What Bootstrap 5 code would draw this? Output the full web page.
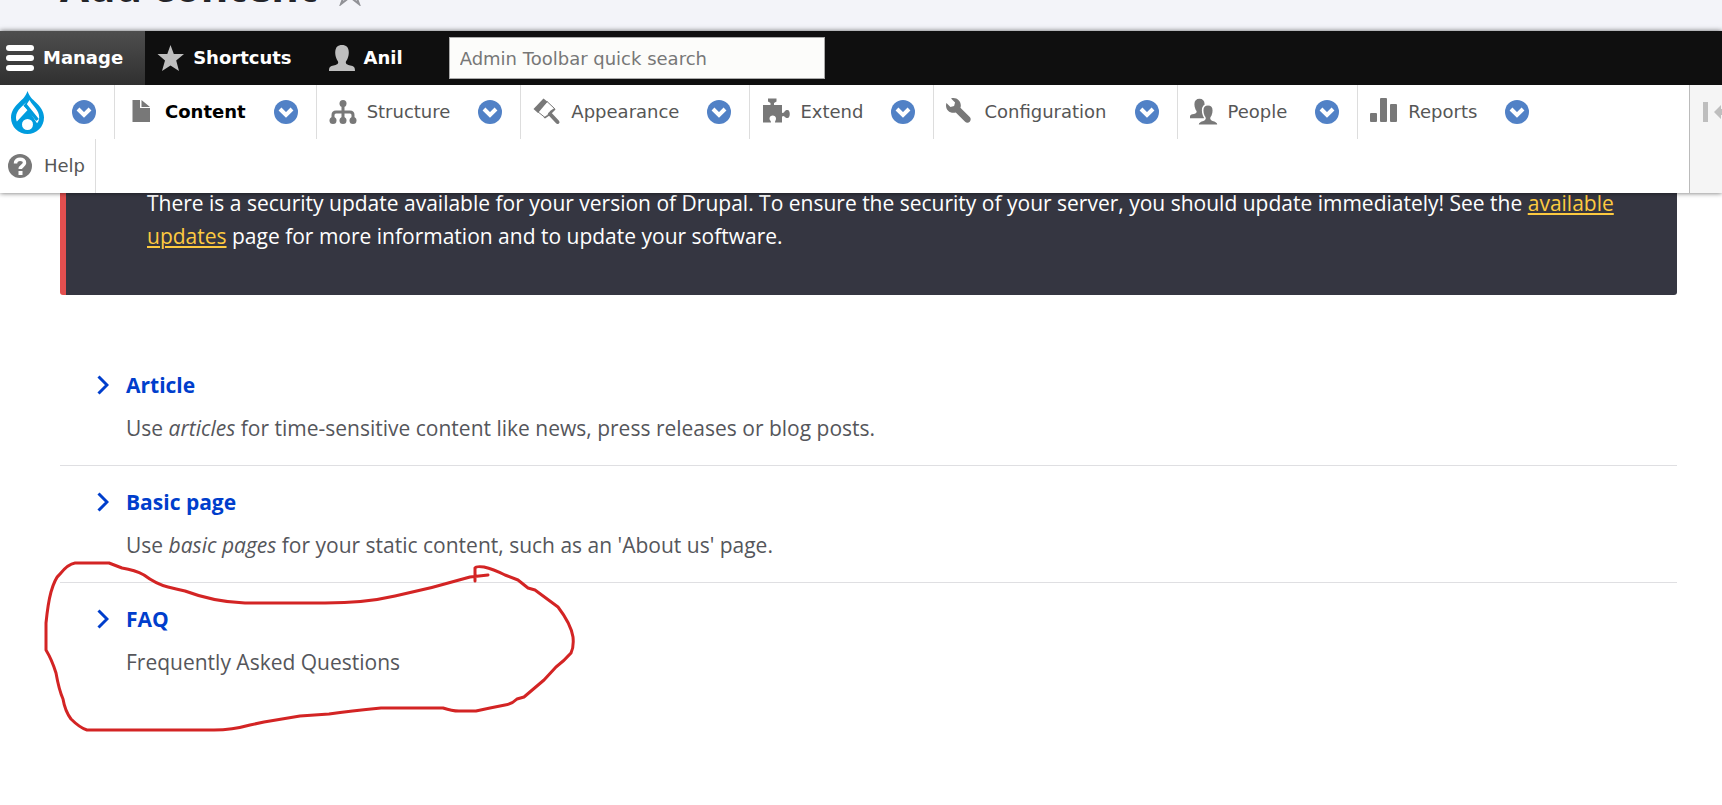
<!DOCTYPE html>
<html lang="en">
<head>
<meta charset="utf-8">
<meta name="viewport" content="width=device-width, initial-scale=1">
<title>Add content</title>
<link href="https://cdn.jsdelivr.net/npm/bootstrap@5.3.0/dist/css/bootstrap.min.css" rel="stylesheet">
<style>
body { font-family: "Open Sans", "Noto Sans", sans-serif; font-size: 21px; color: #55565b; background: #fff; }
.page-head { height: 31px; padding: 0 60px 21px; background: #f3f4f9; color: #232429; }
.page-head h1 { font-size: 42px; line-height: 48px; gap: 19px; }
.toolbar { font-family: "DejaVu Sans", sans-serif; font-size: 18px; line-height: 24px; z-index: 2; box-shadow: 0 0 5px rgba(0,0,0,.6); }
.bar { height: 54px; background: #0f0f0f; }
.bar a { color: #fff; }
.bar .tab-on { background: linear-gradient(#4e4e4e, #303030); padding: 0 22px 0 6px; }
.bar .tab { padding: 0 24px 0 12px; }
.quick { width: 376px; height: 42px; margin-left: 22px; padding: 0 10px; border: 1px solid #aaa; background: #fcfcfa; color: #555; }
.quick::placeholder { color: #777; opacity: 1; }
.tray { background: #fff; }
.tray-item { height: 54px; border-right: 1px solid #ddd; padding: 0 18px 0 12px; }
.tray-item a { color: #565656; gap: 10px; }
.tray-item a.current { color: #000; }
.tray-item.brand { padding-left: 11px; }
.tray-item.last { border: 0; }
.tray-item.help { padding: 0 10px 0 8px; }
.tray-item.help a { gap: 12px; }
.drop-btn { width: 24px; height: 24px; margin-left: 28px; border: 0; padding: 0; border-radius: 50%; background: #5181c6; }
.orient { flex: 0 0 33px; background: #f5f5f5; border: 0; border-left: 1px solid #bbb; padding: 15px 0 0 12px; }
.ic { fill: #787878; flex: none; }
.ic-light { fill: #bebebe; flex: none; }
.content-area { padding: 0 45px 60px 60px; }
.notice { margin-top: -12px; padding: 6px 60px 42px 81px; border-left: 6px solid #e34f4f; border-radius: 3px; background: #353641; color: #fff; line-height: 33px; }
.notice a { color: #fdca40; }
.type-list { margin-top: 54px; }
.type-item { padding: 20px 0; border-bottom: 1px solid #dfdfe2; }
.type-item { padding-left: 66px; }
.type-item:last-child { border: 0; }
.type-item a { color: #003ecc; line-height: 32px; margin-left: -29px; gap: 17px; }
.type-item p { line-height: 33px; margin-top: 11px; }
.scribble { left: -20px; top: -24px; pointer-events: none; }
</style>
</head>
<body>
<svg class="d-none" aria-hidden="true">
  <symbol id="chev" viewBox="0 0 24 24"><path d="M6 9l6 6 6-6" fill="none" stroke="#fff" stroke-width="4"/></symbol>
  <symbol id="person" viewBox="0 0 28 28"><path d="M1 27c0-3 .5-4.300 3.500-5.200 3-.9 5.700-1.300 5.700-3.600 0-1.200-1-1.600-1.700-3.500-.8-2-1.300-4-1.300-6.500C7.200 3.500 9.800 1 14 1s6.800 2.500 6.800 7.200c0 2.500-.5 4.500-1.300 6.500-.7 1.900-1.700 2.300-1.700 3.500 0 2.300 2.700 2.700 5.700 3.600C26.500 22.700 27 24 27 27z"/></symbol>
</svg>

<header class="page-head overflow-hidden d-flex align-items-end">
  <h1 class="fw-bold m-0 d-flex align-items-end">Add content
    <svg class="mb-1" width="28" height="30" viewBox="0 0 28 30" aria-hidden="true"><path d="M14 2l3.500 9H26l-7 6 4 11-9-7-9 7 4-11-7-6h8.500z" fill="none" stroke="#919297" stroke-width="2"/></svg>
  </h1>
</header>

<div class="toolbar position-relative">
  <nav class="bar d-flex align-items-center" aria-label="Toolbar">
    <a href="#" class="tab-on d-flex align-items-center h-100 fw-bold text-decoration-none"><svg class="me-2" width="29" height="28" aria-hidden="true"><g fill="#fff"><rect x="0" y="1" width="28" height="6" rx="3"/><rect x="0" y="11" width="28" height="6" rx="3"/><rect x="0" y="21" width="28" height="6" rx="3"/></g></svg>Manage</a>
    <a href="#" class="tab d-flex align-items-center h-100 fw-bold text-decoration-none"><svg class="ic-light me-2" width="28" height="28" aria-hidden="true"><path d="M13.500 1l3.300 9H27l-7.800 6.500L22 27l-8.500-5.500L5 27l3-10.500L.5 10h9.800z"/></svg>Shortcuts</a>
    <a href="#" class="tab d-flex align-items-center h-100 fw-bold text-decoration-none"><svg class="ic-light me-2" width="28" height="28" aria-hidden="true"><use href="#person"/></svg>Anil</a>
    <input class="quick rounded-0" type="text" placeholder="Admin Toolbar quick search" aria-label="Admin Toolbar quick search">
  </nav>

  <div class="tray d-flex">
    <nav class="flex-grow-1 d-flex flex-wrap" aria-label="Administration">
      <div class="tray-item brand d-flex align-items-center"><a href="#" aria-label="Tools"><svg class="d-block" width="33" height="43" viewBox="0 0 33 43" aria-hidden="true"><path fill="#009cde" d="M16.500 0c2 6 5 8 8.500 11.500C29 15.500 33 20 33 26.500 33 36 25.500 43 16.500 43S0 36 0 26.500C0 20 4 15.500 8 11.500 11.500 8 14.500 6 16.500 0z"/><g fill="#fff"><circle cx="16.500" cy="33.500" r="5.500"/><path d="M16 10.500c-3.500 4-10.500 8-11 15.500-.1 2.500.6 4.700 2 6.300L18.500 20.500l-6-5.800z"/><path d="M18.500 9l-3.700 5.700L26 32.300c1.500-1.600 2.200-4 2.200-6 0-7-6-10.500-9.700-17.300z"/></g><path d="M14 13.500L26.500 29M19.500 18.500L6.500 32.500" stroke="#009cde" stroke-width="3.500"/></svg></a><button class="drop-btn" aria-label="Open tools menu"><svg class="d-block" width="24" height="24"><use href="#chev"/></svg></button></div>
      <div class="tray-item d-flex align-items-center"><a href="#" class="current fw-bold d-flex align-items-center text-decoration-none"><svg class="ic" width="28" height="28"><path d="M5.500 2H13v8h10v14H5.500zM14.500 2l8.500 7h-8.500z"/></svg>Content</a><button class="drop-btn" aria-label="Open Content menu"><svg class="d-block" width="24" height="24"><use href="#chev"/></svg></button></div>
      <div class="tray-item d-flex align-items-center"><a href="#" class="d-flex align-items-center text-decoration-none"><svg class="ic" width="28" height="28"><circle cx="14" cy="5.500" r="3.500"/><circle cx="4" cy="22.500" r="3.500"/><circle cx="14" cy="22.500" r="3.500"/><circle cx="24" cy="22.500" r="3.500"/><path d="M14 5v17M4 22v-5q0-3 3-3h14q3 0 3 3v5" fill="none" stroke="#787878" stroke-width="3"/></svg>Structure</a><button class="drop-btn" aria-label="Open Structure menu"><svg class="d-block" width="24" height="24"><use href="#chev"/></svg></button></div>
      <div class="tray-item d-flex align-items-center"><a href="#" class="d-flex align-items-center text-decoration-none"><svg class="ic" width="28" height="28"><path d="M.5 11L10.500.5l4 3.200L5 15z"/><path d="M4.500 13.500l9.500-10 7.500 7-9.500 9z" fill="none" stroke="#787878"/><path d="M21.500 10l-4.500 3-2 4-4.500 2.500 1.500 1 4.500-3 6-6z"/><path d="M17 16l7.500 8" stroke="#787878" stroke-width="4" stroke-linecap="round"/></svg>Appearance</a><button class="drop-btn" aria-label="Open Appearance menu"><svg class="d-block" width="24" height="24"><use href="#chev"/></svg></button></div>
      <div class="tray-item d-flex align-items-center"><a href="#" class="d-flex align-items-center text-decoration-none"><svg class="ic" width="28" height="28"><path d="M1 7h7.500V5L6 3.500V.500h8.500v3L12 5v2h8v8l2-.5c1-2 2-2.500 3.500-2.500 3 0 3 8 0 8-1.500 0-2.500-.5-3.500-2l-2 .5v6h-7c0-2 1-2 1-4 0-4-6.500-4-6.500 0 0 2 1.500 2 1.500 4H1z"/></svg>Extend</a><button class="drop-btn" aria-label="Open Extend menu"><svg class="d-block" width="24" height="24"><use href="#chev"/></svg></button></div>
      <div class="tray-item d-flex align-items-center"><a href="#" class="d-flex align-items-center text-decoration-none"><svg class="ic" width="28" height="28" viewBox="0 0 17 17"><path d="M14.416 11.586l-5.666-5.665c.15-.449.252-.921.252-1.421 0-2.485-2.016-4.500-4.502-4.500-.505 0-.981.102-1.434.255l2.431 2.431-.588 2.196-2.196.588L.268 3.025C.106 3.489 0 3.981 0 4.500 0 6.986 2.014 9 4.500 9c.5 0 .972-.102 1.421-.251l5.667 5.665c.781.781 2.047.781 2.828 0s.781-2.047 0-2.828z"/></svg>Configuration</a><button class="drop-btn" aria-label="Open Configuration menu"><svg class="d-block" width="24" height="24"><use href="#chev"/></svg></button></div>
      <div class="tray-item d-flex align-items-center"><a href="#" class="d-flex align-items-center text-decoration-none"><svg class="ic" width="28" height="28"><use href="#person" x="-1" y="0" width="21" height="21"/><use href="#person" x="7" y="6" width="22" height="22" stroke="#fff" stroke-width="2"/></svg>People</a><button class="drop-btn" aria-label="Open People menu"><svg class="d-block" width="24" height="24"><use href="#chev"/></svg></button></div>
      <div class="tray-item last d-flex align-items-center"><a href="#" class="d-flex align-items-center text-decoration-none"><svg class="ic" width="28" height="28"><rect x="0" y="15" width="7" height="9" rx="1"/><rect x="10" y="0" width="7" height="24" rx="1"/><rect x="20" y="6" width="7" height="18" rx="1"/></svg>Reports</a><button class="drop-btn" aria-label="Open Reports menu"><svg class="d-block" width="24" height="24"><use href="#chev"/></svg></button></div>
      <div class="w-100"></div>
      <div class="tray-item help d-flex align-items-center"><a href="#" class="d-flex align-items-center text-decoration-none"><svg class="ic" width="24" height="24"><circle cx="12" cy="12" r="12"/><path d="M7.500 9.500C7.500 3.500 17 4 16.500 9c-.3 3-4.300 3-4.300 6" fill="none" stroke="#fff" stroke-width="3.500"/><rect x="10.500" y="17" width="4" height="4" fill="#fff"/></svg>Help</a></div>
    </nav>
    <button class="orient d-flex align-items-start overflow-hidden" aria-label="Vertical orientation"><svg class="ic-light" width="28" height="24"><path d="M1 2h5v20H1zM12 12l7-7v4h8v6h-8v4z"/></svg></button>
  </div>
</div>

<main class="content-area">
  <div class="notice" role="alert">There is a security update available for your version of Drupal. To ensure the security of your server, you should update immediately! See the <a href="#">available updates</a> page for more information and to update your software.</div>
  <ul class="type-list list-unstyled mb-0">
    <li class="type-item"><a href="#" class="d-flex align-items-center fw-bold text-decoration-none"><svg width="12" height="20" aria-hidden="true"><path d="M1.500 1.500L10 10l-8.500 8.500" fill="none" stroke="#003ecc" stroke-width="3"/></svg>Article</a><p class="mb-0">Use <em>articles</em> for time-sensitive content like news, press releases or blog posts.</p></li>
    <li class="type-item"><a href="#" class="d-flex align-items-center fw-bold text-decoration-none"><svg width="12" height="20" aria-hidden="true"><path d="M1.500 1.500L10 10l-8.500 8.500" fill="none" stroke="#003ecc" stroke-width="3"/></svg>Basic page</a><p class="mb-0">Use <em>basic pages</em> for your static content, such as an 'About us' page.</p></li>
    <li class="type-item position-relative"><a href="#" class="d-flex align-items-center fw-bold text-decoration-none"><svg width="12" height="20" aria-hidden="true"><path d="M1.500 1.500L10 10l-8.500 8.500" fill="none" stroke="#003ecc" stroke-width="3"/></svg>FAQ</a><p class="mb-0">Frequently Asked Questions</p>
      <svg class="scribble position-absolute" width="540" height="180" viewBox="40 559 540 180" aria-hidden="true"><path d="M475 581V568Q476 566 484 567Q493 569 505 575L518 580L528 588L535 590L558 607Q571 624 573 637Q574 647 571 653Q564 661 556 667L544 680L524 697L517 699Q512 704 505 705L490 708L476 711H459Q452 711 443 708H381Q350 711 329 714L300 716L264 722L250 725Q232 730 214 730H87Q80 728 71 719Q65 711 63 699Q59 690 56 673Q52 660 46 650V623Q48 603 51 592Q55 578 60 574Q68 564 75 563H109L122 568Q135 570 144 575Q156 584 168 587Q176 589 185 591Q214 602 245 603H325Q365 603 395 596Q433 588 470 577L488 575" fill="none" stroke="#d32424" stroke-width="3" stroke-linejoin="round" stroke-linecap="round"/></svg>
    </li>
  </ul>
</main>
<script src="https://cdn.jsdelivr.net/npm/bootstrap@5.3.0/dist/js/bootstrap.bundle.min.js"></script>
</body>
</html>
